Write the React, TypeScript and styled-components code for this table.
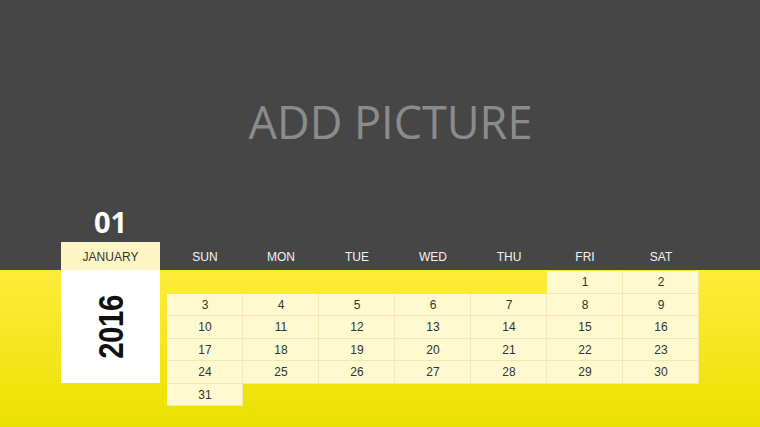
import React from "react";
import styled, { createGlobalStyle } from "styled-components";

const GlobalStyle = createGlobalStyle`
  html, body {
    margin: 0;
    padding: 0;
  }
`;

const Page = styled.div`
  width: 760px;
  height: 427px;
  overflow: hidden;
  background: linear-gradient(
    to bottom,
    #464646 0,
    #464646 270px,
    #ffeb3c 270px,
    #ebe100 427px
  );
  font-family: "Liberation Sans", Arial, sans-serif;
`;

const Hero = styled.div`
  height: 208px;
  padding: 34px 0 0 21px;
  box-sizing: border-box;
  display: flex;
  align-items: center;
  justify-content: center;
  font-family: "Open Sans", "Liberation Sans", sans-serif;
  font-size: 45px;
  color: #8b8b8b;
`;

const Calendar = styled.div`
  display: flex;
  gap: 7px;
  padding-left: 61px;
`;

const Side = styled.div`
  width: 99px;
  display: flex;
  flex-direction: column;
`;

const DayNum = styled.div`
  height: 34px;
  display: flex;
  align-items: center;
  justify-content: center;
  font-family: "Open Sans", "Liberation Sans", sans-serif;
  font-weight: 700;
  font-size: 29px;
  color: #ffffff;
  padding-bottom: 8px;
  box-sizing: border-box;
`;

const MonthTab = styled.div`
  height: 28px;
  background: #fdf6c4;
  display: flex;
  align-items: center;
  justify-content: center;
  font-size: 12px;
  color: #333333;
  padding-top: 2px;
  box-sizing: border-box;
`;

const YearBox = styled.div`
  height: 113px;
  background: #ffffff;
  display: flex;
  align-items: center;
  justify-content: center;
`;

const Year = styled.div`
  transform: rotate(-90deg) scaleX(0.84);
  font-size: 35px;
  font-weight: 700;
  color: #111111;
  letter-spacing: -0.5px;
`;

const Grid = styled.div`
  padding-top: 34px;
  display: grid;
  grid-template-columns: repeat(7, 76px);
  grid-template-rows: 29px repeat(6, 22.5px);
`;

const HeadCell = styled.div`
  display: flex;
  align-items: center;
  justify-content: center;
  font-size: 12px;
  color: #f2f2f2;
  padding-top: 1px;
  box-sizing: border-box;
`;

const Cell = styled.div<{ $empty?: boolean }>`
  display: flex;
  align-items: center;
  justify-content: center;
  font-size: 12px;
  color: #333333;
  background: ${(p) => (p.$empty ? "transparent" : "#fef9cf")};
  box-shadow: ${(p) => (p.$empty ? "none" : "inset -1px -1px 0 #f1e8b4")};
`;

const days = ["SUN", "MON", "TUE", "WED", "THU", "FRI", "SAT"];

const cells: (number | null)[] = [
  null, null, null, null, null, 1, 2,
  ...Array.from({ length: 28 }, (_, i) => i + 3),
  31,
];

export default function App() {
  return (
    <Page>
      <GlobalStyle />
      <Hero>ADD PICTURE</Hero>
      <Calendar>
        <Side>
          <DayNum>01</DayNum>
          <MonthTab>JANUARY</MonthTab>
          <YearBox>
            <Year>2016</Year>
          </YearBox>
        </Side>
        <Grid>
          {days.map((d) => (
            <HeadCell key={d}>{d}</HeadCell>
          ))}
          {cells.map((n, i) =>
            n === null ? <Cell key={i} $empty /> : <Cell key={i}>{n}</Cell>
          )}
        </Grid>
      </Calendar>
    </Page>
  );
}
